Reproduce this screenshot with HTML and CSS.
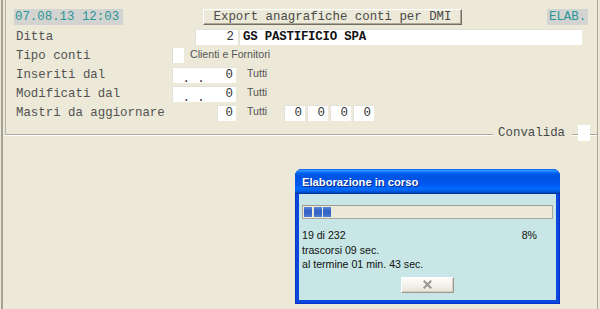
FILE: index.html
```html
<!DOCTYPE html>
<html lang="it">
<head>
<meta charset="utf-8">
<title>Export anagrafiche conti per DMI</title>
<link rel="stylesheet" href="styles.css">
</head>
<body>
<div class="screen">
  <div class="group">
    <div class="groupbody">
      <div class="header">
        <div class="stamp">07.08.13 12:03</div>
        <div class="titlebtn">Export anagrafiche conti per DMI</div>
        <div class="stamp elab">ELAB.</div>
      </div>
      <div class="form">
        <div class="row">
          <div class="label">Ditta</div>
          <div class="field num ditta-code">2</div>
          <div class="field ditta-name">GS PASTIFICIO SPA</div>
        </div>
        <div class="row">
          <div class="label">Tipo conti</div>
          <div class="check"></div>
          <div class="note note-tipo">Clienti e Fornitori</div>
        </div>
        <div class="row">
          <div class="label">Inseriti dal</div>
          <div class="field num date-field"><span class="date">&nbsp;.&nbsp;.</span><span>0</span></div>
          <div class="note note-tutti">Tutti</div>
        </div>
        <div class="row">
          <div class="label">Modificati dal</div>
          <div class="field num date-field"><span class="date">&nbsp;.&nbsp;.</span><span>0</span></div>
          <div class="note note-tutti">Tutti</div>
        </div>
        <div class="row">
          <div class="label">Mastri da aggiornare</div>
          <div class="field num mastro">0</div>
          <div class="note note-tutti note-wide">Tutti</div>
          <div class="boxes">
            <div class="field num box">0</div>
            <div class="field num box">0</div>
            <div class="field num box">0</div>
            <div class="field num box">0</div>
          </div>
        </div>
      </div>
    </div>
    <div class="convrow">
      <div class="seg seg-first"></div>
      <div class="convlabel">Convalida</div>
      <div class="seg seg-short"></div>
      <div class="check conv-check"></div>
      <div class="seg seg-end"></div>
    </div>
  </div>

  <div class="dialog">
    <div class="dtitle">Elaborazione in corso</div>
    <div class="dbody">
      <div class="progress">
        <div class="block"></div>
        <div class="block"></div>
        <div class="block"></div>
      </div>
      <div class="info">
        <div class="inforow"><span>19 di 232</span><span>8%</span></div>
        <div class="inforow"><span>trascorsi 09 sec.</span></div>
        <div class="inforow"><span>al termine 01 min. 43 sec.</span></div>
      </div>
      <div class="xpbtn">
        <svg width="9" height="9" viewBox="0 0 9 9" aria-hidden="true">
          <path d="M1.5 1.5 L7.5 7.5 M7.5 1.5 L1.5 7.5" stroke="#9b9990" stroke-width="2.2" stroke-linecap="square" fill="none"/>
        </svg>
      </div>
    </div>
  </div>
</div>
</body>
</html>
```

FILE: styles.css
```css
html, body {
  margin: 0;
  padding: 0;
}
body {
  background: #ECE9D8;
  width: 600px;
  height: 309px;
  overflow: hidden;
  font-family: "Liberation Mono", "Courier New", monospace;
  font-size: 12.4px;
  color: #4d4d4d;
}
.screen {
  position: relative;
  margin-left: 1px;
  width: 594px;
  height: 309px;
  border-left: 2px solid #a4a296;
  border-right: 1px solid #aca899;
}
.group {
  margin-left: 2px;
  display: flex;
  flex-direction: column;
}
.groupbody {
  border-left: 1px solid #b4b2a6;
  padding-bottom: 4px;
}
.header {
  display: flex;
  height: 16px;
  margin-top: 9px;
  line-height: 16px;
}
.stamp {
  box-sizing: border-box;
  width: 109px;
  height: 16px;
  margin-left: 8px;
  padding-left: 1px;
  background: #d3d3d1;
  color: #2a9696;
  white-space: pre;
}
.elab {
  width: 41px;
  margin-left: 85px;
  padding-left: 2px;
}
.titlebtn {
  box-sizing: border-box;
  width: 259px;
  height: 16px;
  margin-left: 80px;
  text-align: center;
  line-height: 14px;
  background: #ECE9D8;
  border: 1px solid;
  border-color: #ffffff #716f64 #716f64 #ffffff;
  box-shadow: inset -1px -1px 0 #aca899;
  color: #4a4a4a;
  white-space: pre;
}
.form {
  margin-top: 4px;
  display: flex;
  flex-direction: column;
  gap: 3px;
}
.row {
  display: flex;
  align-items: flex-start;
  height: 16px;
  line-height: 16px;
}
.label {
  width: 156px;
  margin-left: 10px;
  white-space: pre;
  color: #525252;
}
.field {
  box-sizing: border-box;
  height: 16px;
  background: #ffffff;
  border-top: 1px solid #e4e2d8;
  border-left: 1px solid #e4e2d8;
  line-height: 15px;
  color: #333333;
  white-space: pre;
}
.num {
  text-align: right;
  padding-right: 3px;
}
.ditta-code {
  width: 43px;
  margin-left: 23px;
  padding-right: 4px;
}
.ditta-name {
  width: 343px;
  margin-left: 1px;
  padding-left: 3px;
  color: #111111;
  font-weight: bold;
  letter-spacing: -0.2px;
}
.check {
  box-sizing: border-box;
  width: 12px;
  height: 15px;
  background: #ffffff;
  border-left: 1px solid #e0ded3;
}
.note {
  font-family: "Liberation Sans", Arial, sans-serif;
  font-size: 10.6px;
  line-height: 13px;
  color: #555555;
  white-space: pre;
}
.note-tipo {
  margin-left: 6px;
}
.note-tutti {
  margin-left: 11px;
}
.note-wide {
  width: 37px;
}
.date-field {
  width: 64px;
  display: flex;
  justify-content: space-between;
  padding-left: 2px;
}
.date {
  align-self: flex-end;
  line-height: 12px;
  position: relative;
  top: 2px;
}
.mastro {
  width: 19px;
  margin-left: 45px;
}
.boxes {
  display: flex;
  gap: 2px;
}
.box {
  width: 21px;
}
.convrow {
  display: flex;
  align-items: flex-start;
  height: 16px;
}
.seg {
  box-sizing: border-box;
  height: 10px;
  border-bottom: 1px solid #aca899;
  box-shadow: 0 1px 0 #ffffff;
}
.seg-first {
  flex: 1;
  border-left: 1px solid #b4b2a6;
}
.convlabel {
  flex: none;
  margin: 0 7px 0 5px;
  line-height: 16px;
  color: #4a4a4a;
}
.seg-short {
  width: 6px;
}
.conv-check {
  height: 16px;
  border-left: none;
}
.seg-end {
  width: 7px;
}

/* dialog window floating over the form */
.dialog {
  position: absolute;
  left: 292px;
  top: 169px;
  width: 265px;
  height: 135px;
  box-sizing: border-box;
  background: #0a47dc;
  border-radius: 7px 7px 0 0;
  box-shadow: inset 0 0 0 1px #0831c9;
  display: flex;
  flex-direction: column;
  font-family: "Liberation Sans", Arial, sans-serif;
}
.dtitle {
  height: 25px;
  padding-left: 7px;
  border-radius: 7px 7px 0 0;
  background: linear-gradient(to bottom, #0058ee 0%, #3593ff 5%, #288eff 8%, #127dff 11%, #036ffc 14%, #0262ee 18%, #0057e5 24%, #0054e3 30%, #0055eb 56%, #005bf5 66%, #026afe 76%, #0062ef 86%, #0052d6 92%, #0040ab 96%, #003092 100%);
  color: #ffffff;
  font-weight: bold;
  font-size: 11.2px;
  line-height: 26px;
  text-shadow: 1px 1px 0 #0b2a8a;
}
.dbody {
  flex: 1;
  margin: 0 4px 4px 4px;
  background: #c7e6e5;
  display: flex;
  flex-direction: column;
}
.progress {
  box-sizing: border-box;
  margin: 11px 3px 0 3px;
  height: 14px;
  padding: 1px;
  border: 1px solid #a9a89e;
  border-top-color: #9e9d93;
  background: #ece9d8;
  display: flex;
  gap: 1.5px;
}
.block {
  width: 8px;
  height: 10px;
  background: linear-gradient(to bottom, #5d88d9 0%, #3565c6 35%, #3565c6 65%, #4f7dd4 100%);
}
.info {
  margin-top: 9px;
  padding-left: 3px;
  padding-right: 19px;
  font-size: 10.6px;
  line-height: 14.5px;
  color: #111111;
}
.inforow {
  display: flex;
  justify-content: space-between;
}
.xpbtn {
  box-sizing: border-box;
  width: 53px;
  height: 16px;
  margin: 5px auto 0 auto;
  border: 1px solid;
  border-color: #ffffff #9c9a8e #9c9a8e #ffffff;
  background: linear-gradient(to bottom, #fdfdfb 0%, #f2f0e8 60%, #e6e3d6 100%);
  box-shadow: inset -1px -1px 0 #d3d0c2;
  display: flex;
  align-items: center;
  justify-content: center;
}
```
